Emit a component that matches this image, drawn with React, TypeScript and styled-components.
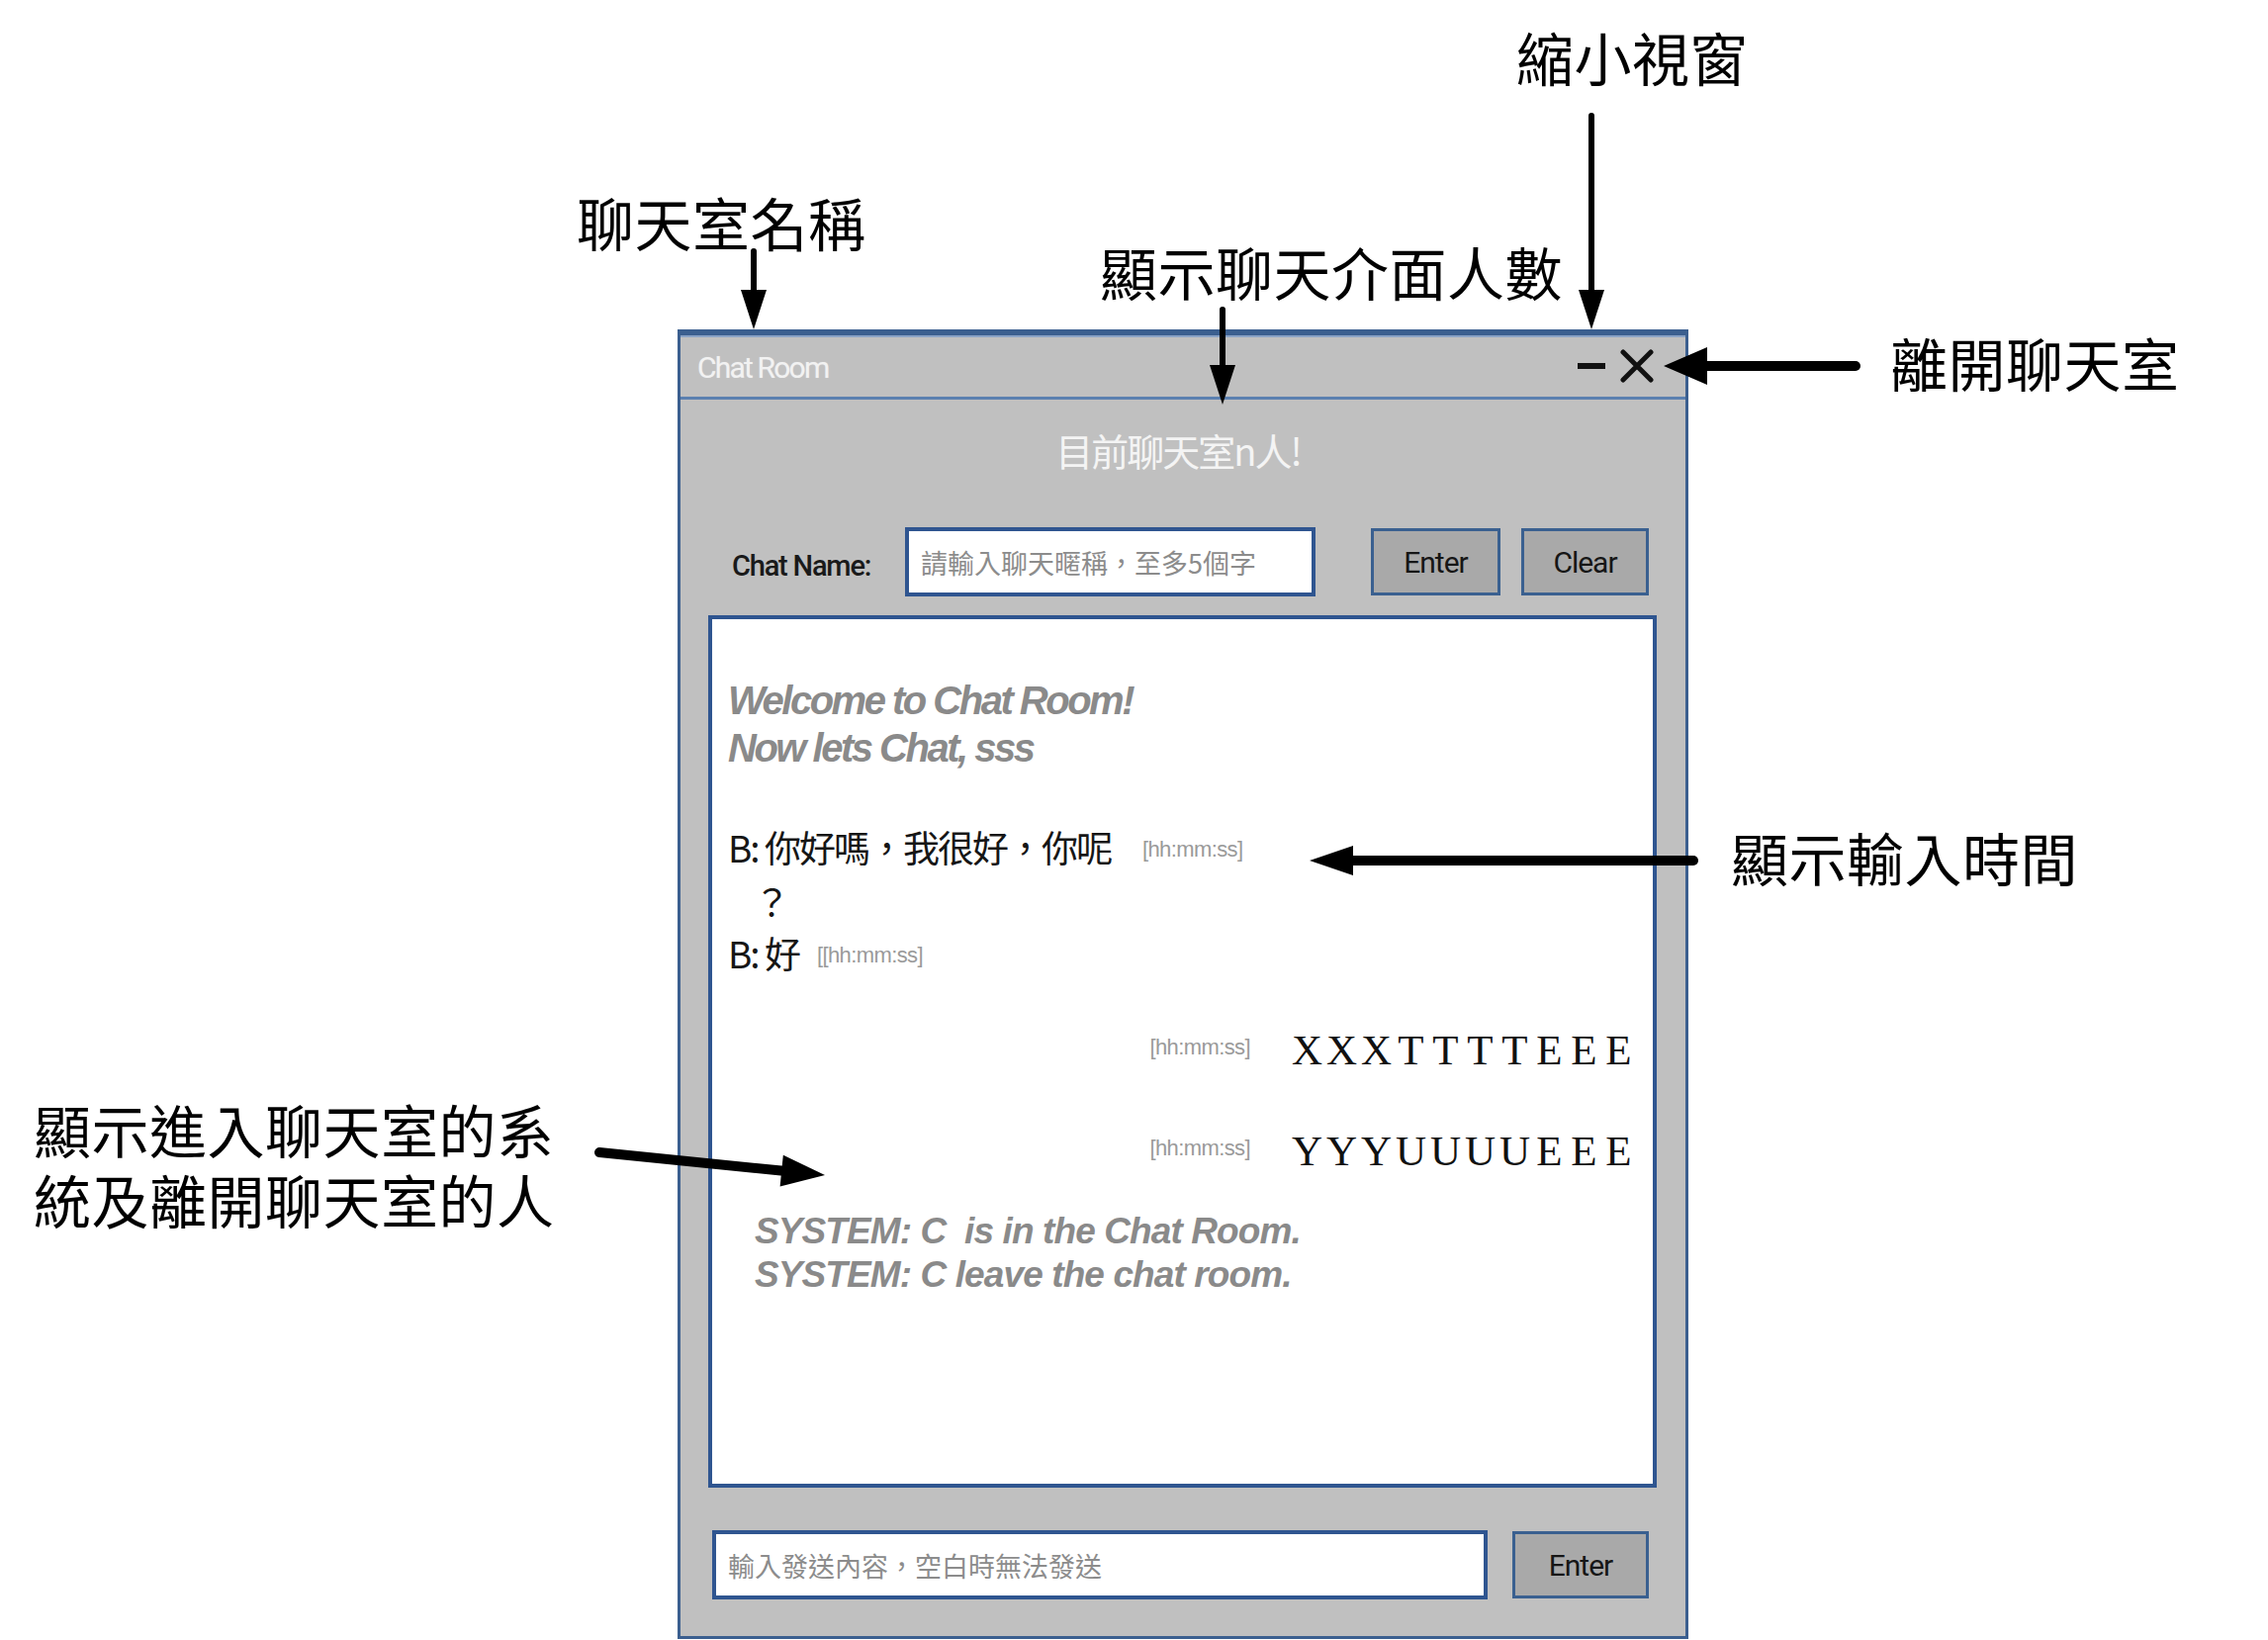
import styled, { createGlobalStyle } from "styled-components";

const GlobalStyle = createGlobalStyle`
  html, body {
    margin: 0;
    padding: 0;
    background: #ffffff;
  }
`;

const cjk = `"Noto Sans CJK TC", "Noto Sans CJK SC", sans-serif`;
const ui = `Roboto, "Noto Sans CJK TC", sans-serif`;
const arial = `"Liberation Sans", Arial, sans-serif`;

const Canvas = styled.div`
  position: relative;
  width: 2293px;
  height: 1658px;
  box-sizing: border-box;
  padding: 333px 0 0 685px;
  overflow: hidden;
  background: #ffffff;
`;

const ChatWindow = styled.div`
  width: 1022px;
  height: 1324px;
  box-sizing: border-box;
  border: 3px solid #3b5f8f;
  border-top-width: 6px;
  background: #c0c0c0;
  display: flex;
  flex-direction: column;
`;

const TitleBar = styled.div`
  height: 62px;
  flex: none;
  display: flex;
  align-items: center;
  padding: 0 32px 0 17px;
  border-bottom: 3px solid #5b80b0;
  box-shadow: inset 0 2px 0 #8aa3c6;
`;

const Title = styled.div`
  flex: 1;
  font-family: ${ui};
  font-size: 30px;
  letter-spacing: -1.8px;
  color: #f2f2f2;
  text-shadow: 0 0 1px #d8d8d8;
  padding-top: 2px;
`;

const Controls = styled.div`
  display: flex;
  align-items: center;
  gap: 15px;
`;

const Header = styled.div`
  height: 101px;
  flex: none;
  display: flex;
  align-items: center;
  justify-content: center;
  font-family: ${cjk};
  font-size: 38px;
  letter-spacing: -2px;
  color: #f4f4f4;
  padding-right: 10px;
`;

const NameRow = styled.div`
  margin-top: 28px;
  height: 70px;
  flex: none;
  display: flex;
  align-items: center;
  padding-left: 52px;
`;

const Label = styled.div`
  width: 175px;
  padding-top: 8px;
  font-family: ${ui};
  font-weight: 500;
  font-size: 29px;
  letter-spacing: -1.2px;
  color: #1a1a1a;
`;

const TextBox = styled.input<{ $width: number }>`
  width: ${(p) => p.$width}px;
  height: 70px;
  box-sizing: border-box;
  border: 4px solid #2f5590;
  background: #ffffff;
  padding: 0 12px;
  margin: 0;
  outline: none;
  font-family: ${cjk};
  font-size: 27px;
  color: #222;
  &::placeholder {
    color: #8c8c8c;
  }
`;

const Button = styled.button<{ $width: number; $gap: number }>`
  width: ${(p) => p.$width}px;
  height: 68px;
  margin: 0 0 0 ${(p) => p.$gap}px;
  padding: 0;
  box-sizing: border-box;
  border: 3px solid #3a6090;
  background: #a9a9a9;
  font-family: ${ui};
  font-size: 30px;
  letter-spacing: -1px;
  color: #161616;
`;

const ChatBox = styled.div`
  margin: 19px 29px 0 28px;
  height: 882px;
  flex: none;
  box-sizing: border-box;
  border: 4px solid #2f5590;
  background: #ffffff;
  padding: 58px 17px 0 16px;
  display: flex;
  flex-direction: column;
`;

const Welcome = styled.div`
  font-family: ${arial};
  font-weight: bold;
  font-style: italic;
  font-size: 40px;
  line-height: 48px;
  letter-spacing: -2.5px;
  color: #8a8a8a;
`;

const Messages = styled.div`
  margin-top: 50px;
  font-family: ${cjk};
  font-size: 37px;
  line-height: 52px;
  letter-spacing: -2px;
  color: #161616;
`;

const MessageLine = styled.div<{ $indent?: number }>`
  padding-left: ${(p) => p.$indent ?? 0}px;
  white-space: pre;
`;

const Stamp = styled.span<{ $gap?: number }>`
  display: inline-block;
  vertical-align: middle;
  margin-left: ${(p) => p.$gap ?? 0}px;
  margin-top: -6px;
  font-family: ${arial};
  font-size: 22px;
  letter-spacing: -0.6px;
  color: #9a9a9a;
`;

const OwnRow = styled.div<{ $top: number }>`
  margin-top: ${(p) => p.$top}px;
  height: 60px;
  display: flex;
  align-items: center;
  justify-content: flex-end;
  gap: 40px;
`;

const OwnText = styled.span`
  display: flex;
  font-family: "Liberation Serif", "Times New Roman", serif;
  font-size: 43px;
  color: #111;
  line-height: 60px;
`;

const Cell = styled.span`
  width: 35px;
  text-align: center;
`;

const SystemText = styled.div`
  margin-top: 29px;
  padding-left: 27px;
  font-family: ${arial};
  font-weight: bold;
  font-style: italic;
  font-size: 37px;
  line-height: 44px;
  letter-spacing: -0.9px;
  color: #8a8a8a;
  white-space: pre;
`;

const SendRow = styled.div`
  margin-top: 43px;
  height: 70px;
  flex: none;
  display: flex;
  align-items: center;
  padding-left: 32px;
`;

const Note = styled.div<{ $x: number; $y: number }>`
  position: absolute;
  left: ${(p) => p.$x}px;
  top: ${(p) => p.$y}px;
  font-family: ${cjk};
  font-size: 58px;
  line-height: 71px;
  letter-spacing: 0.5px;
  color: #000;
  white-space: nowrap;
`;

const Overlay = styled.svg`
  position: absolute;
  left: 0;
  top: 0;
  width: 2293px;
  height: 1658px;
  pointer-events: none;
`;

type ArrowSpec = { x1: number; y1: number; x2: number; y2: number; w: number; hl: number; hw: number };

const arrows: ArrowSpec[] = [
  { x1: 762, y1: 254, x2: 762, y2: 333, w: 6, hl: 40, hw: 26 },
  { x1: 1236, y1: 313, x2: 1236, y2: 409, w: 6, hl: 40, hw: 26 },
  { x1: 1609, y1: 117, x2: 1609, y2: 333, w: 6, hl: 40, hw: 26 },
  { x1: 1876, y1: 370, x2: 1682, y2: 370, w: 10, hl: 44, hw: 38 },
  { x1: 1712, y1: 870, x2: 1324, y2: 870, w: 10, hl: 44, hw: 30 },
  { x1: 606, y1: 1165, x2: 834, y2: 1188, w: 10, hl: 44, hw: 32 },
];

function Arrow({ x1, y1, x2, y2, w, hl, hw }: ArrowSpec) {
  const len = Math.hypot(x2 - x1, y2 - y1);
  const ux = (x2 - x1) / len;
  const uy = (y2 - y1) / len;
  const bx = x2 - ux * hl;
  const by = y2 - uy * hl;
  const px = -uy * (hw / 2);
  const py = ux * (hw / 2);
  return (
    <g>
      <line x1={x1} y1={y1} x2={bx + ux * 2} y2={by + uy * 2} stroke="#000" strokeWidth={w} strokeLinecap="round" />
      <polygon points={`${x2},${y2} ${bx + px},${by + py} ${bx - px},${by - py}`} fill="#000" />
    </g>
  );
}

function WindowButtons() {
  return (
    <Controls>
      <svg width="28" height="6" viewBox="0 0 28 6">
        <rect x="0" y="0" width="28" height="6" fill="#111" />
      </svg>
      <svg width="34" height="34" viewBox="0 0 34 34">
        <path d="M3 3 L31 31 M31 3 L3 31" stroke="#111" strokeWidth="5" strokeLinecap="round" />
      </svg>
    </Controls>
  );
}

function OwnMessage({ text, top }: { text: string; top: number }) {
  return (
    <OwnRow $top={top}>
      <Stamp>[hh:mm:ss]</Stamp>
      <OwnText>
        {text.split("").map((c, i) => (
          <Cell key={i}>{c}</Cell>
        ))}
      </OwnText>
    </OwnRow>
  );
}

export default function App() {
  return (
    <>
      <GlobalStyle />
      <Canvas>
        <ChatWindow>
          <TitleBar>
            <Title>Chat Room</Title>
            <WindowButtons />
          </TitleBar>
          <Header>目前聊天室n人!</Header>
          <NameRow>
            <Label>Chat Name:</Label>
            <TextBox $width={415} placeholder="請輸入聊天暱稱，至多5個字" />
            <Button $width={131} $gap={56}>Enter</Button>
            <Button $width={129} $gap={21}>Clear</Button>
          </NameRow>
          <ChatBox>
            <Welcome>
              <div>Welcome to Chat Room!</div>
              <div>Now lets Chat, sss</div>
            </Welcome>
            <Messages>
              <MessageLine>
                {"B: 你好嗎，我很好，你呢"}
                <Stamp $gap={32}>[hh:mm:ss]</Stamp>
              </MessageLine>
              <MessageLine $indent={26}>？</MessageLine>
              <MessageLine>
                {"B: 好"}
                <Stamp $gap={18}>[[hh:mm:ss]</Stamp>
              </MessageLine>
            </Messages>
            <OwnMessage text="XXXTTTTEEE" top={40} />
            <OwnMessage text="YYYUUUUEEE" top={42} />
            <SystemText>
              <div>{"SYSTEM: C  is in the Chat Room."}</div>
              <div>SYSTEM: C leave the chat room.</div>
            </SystemText>
          </ChatBox>
          <SendRow>
            <TextBox $width={784} placeholder="輸入發送內容，空白時無法發送" />
            <Button $width={138} $gap={25}>Enter</Button>
          </SendRow>
        </ChatWindow>

        <Note $x={1533} $y={22}>縮小視窗</Note>
        <Note $x={583} $y={189}>聊天室名稱</Note>
        <Note $x={1112} $y={239}>顯示聊天介面人數</Note>
        <Note $x={1911} $y={331}>離開聊天室</Note>
        <Note $x={1750} $y={831}>顯示輸入時間</Note>
        <Note $x={34} $y={1106}>
          <div>顯示進入聊天室的系</div>
          <div>統及離開聊天室的人</div>
        </Note>

        <Overlay viewBox="0 0 2293 1658">
          {arrows.map((a, i) => (
            <Arrow key={i} {...a} />
          ))}
        </Overlay>
      </Canvas>
    </>
  );
}
